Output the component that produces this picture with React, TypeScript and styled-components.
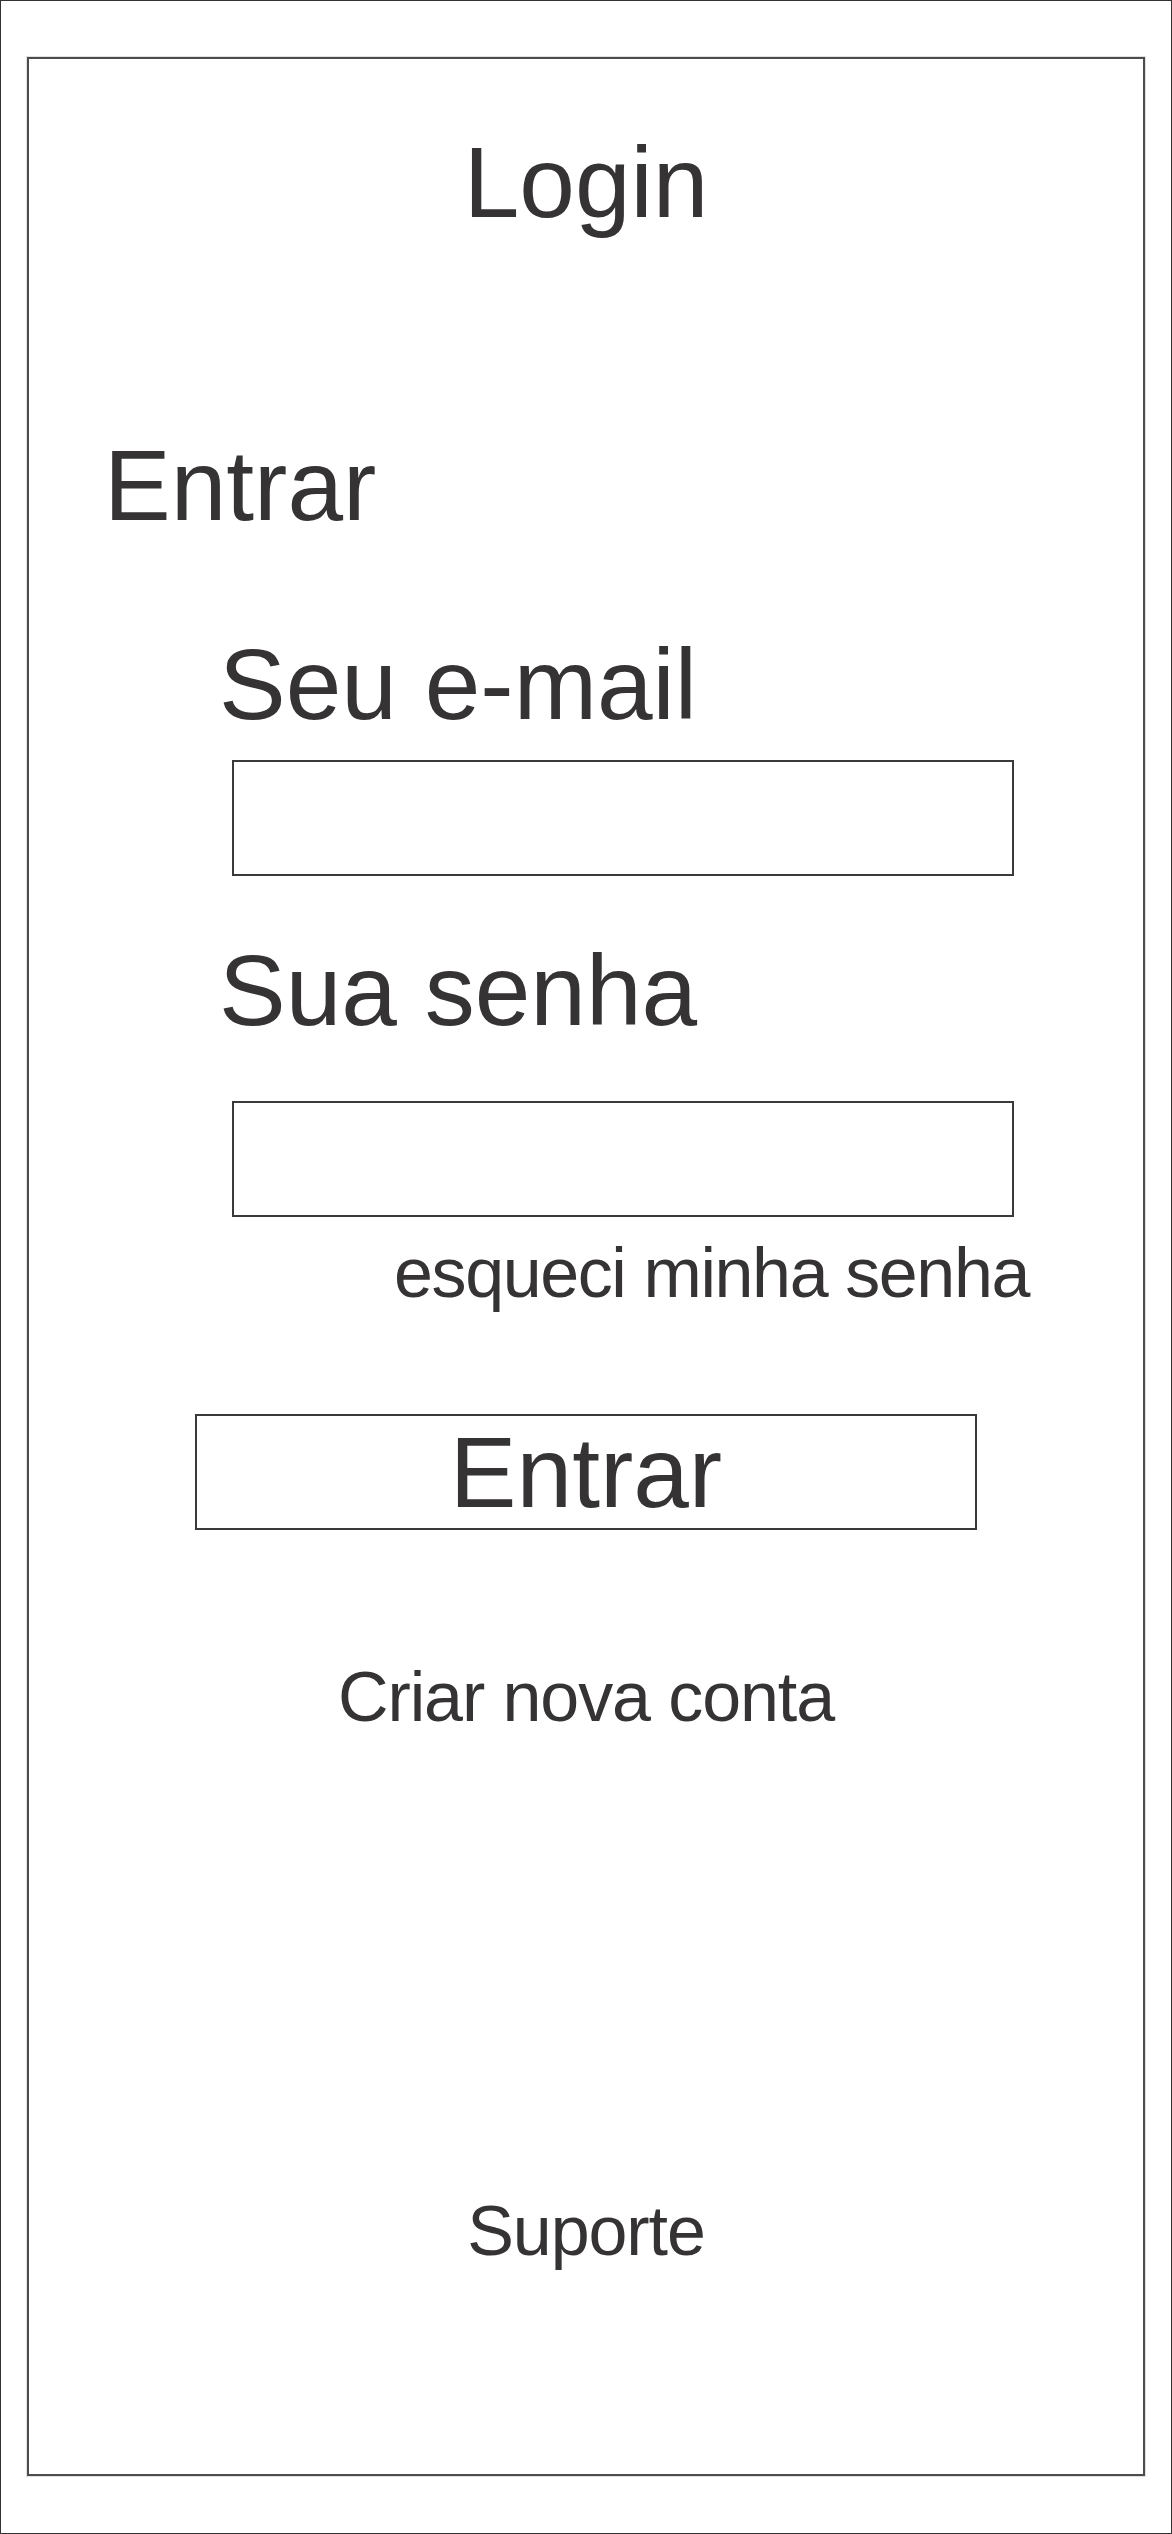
import { ReactElement } from 'react'
import styled, { createGlobalStyle } from 'styled-components'

const GlobalStyle = createGlobalStyle`
  html, body {
    margin: 0;
    padding: 0;
    background: #ffffff;
  }
  body {
    font-family: "Liberation Sans", Arial, sans-serif;
    color: #353334;
  }
  * {
    box-sizing: border-box;
  }
`

function App(): ReactElement {
  return (
    <>
      <GlobalStyle />
      <Page>
        <Frame>
          <PageTitle>Login</PageTitle>
          <SectionTitle>Entrar</SectionTitle>
          <Form onSubmit={(e) => e.preventDefault()}>
            <FieldLabel htmlFor="email" $gap={99}>
              Seu e-mail
            </FieldLabel>
            <TextField id="email" type="email" $gap={26} />
            <FieldLabel htmlFor="senha" $gap={64}>
              Sua senha
            </FieldLabel>
            <TextField id="senha" type="password" $gap={61} />
            <ForgotLink href="#">esqueci minha senha</ForgotLink>
            <SubmitButton type="submit">Entrar</SubmitButton>
          </Form>
          <CenterLink href="#" $gap={132}>
            Criar nova conta
          </CenterLink>
          <CenterLink href="#" $gap={464}>
            Suporte
          </CenterLink>
        </Frame>
      </Page>
    </>
  )
}

export default App

const Page = styled.div`
  width: 1172px;
  height: 2534px;
  border: 1px solid #333333;
  padding: 56px 0 0 26px;
`

const Frame = styled.div`
  width: 1118px;
  height: 2419px;
  border: 2px solid #4d4d4d;
  box-shadow: 0 0 0 1px rgba(0, 0, 0, 0.12);
  display: flex;
  flex-direction: column;
  padding-top: 73px;
`

const PageTitle = styled.h1`
  margin: 0;
  font-size: 100px;
  font-weight: 400;
  line-height: 1;
  text-align: center;
`

const SectionTitle = styled.h2`
  margin: 203px 0 0 75px;
  font-size: 100px;
  font-weight: 400;
  line-height: 1;
`

const Form = styled.form`
  display: flex;
  flex-direction: column;
  align-items: flex-start;
  margin: 0;
`

const FieldLabel = styled.label<{ $gap: number }>`
  margin: ${(p) => p.$gap}px 0 0 190px;
  font-size: 100px;
  line-height: 1;
`

const TextField = styled.input<{ $gap: number }>`
  margin: ${(p) => p.$gap}px 0 0 203px;
  width: 782px;
  height: 116px;
  border: 2px solid #3a3a3a;
  border-radius: 0;
  background: #ffffff;
  padding: 0 16px;
  font-family: inherit;
  font-size: 48px;
  color: inherit;
  outline: none;
`

const ForgotLink = styled.a`
  margin: 21px 0 0 365px;
  font-size: 70px;
  line-height: 1;
  letter-spacing: -1.4px;
  color: inherit;
  text-decoration: none;
`

const SubmitButton = styled.button`
  margin: 106px 0 0 166px;
  width: 782px;
  height: 116px;
  border: 2px solid #3a3a3a;
  border-radius: 0;
  background: #ffffff;
  padding: 0;
  display: flex;
  align-items: center;
  justify-content: center;
  font-family: inherit;
  font-size: 100px;
  line-height: 1;
  color: inherit;
  cursor: pointer;
`

const CenterLink = styled.a<{ $gap: number }>`
  margin-top: ${(p) => p.$gap}px;
  align-self: center;
  font-size: 70px;
  line-height: 1;
  letter-spacing: -1.1px;
  color: inherit;
  text-decoration: none;
`
